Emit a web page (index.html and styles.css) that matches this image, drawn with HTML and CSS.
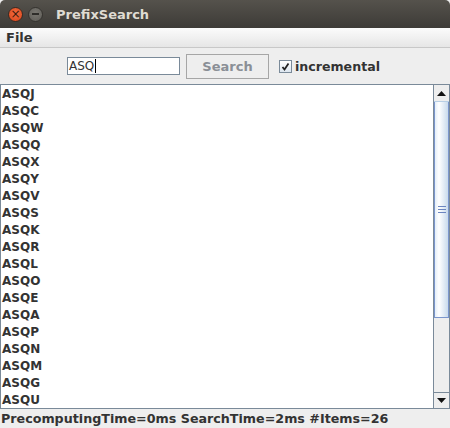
FILE: index.html
```html
<!DOCTYPE html>
<html>
<head>
<meta charset="utf-8">
<link rel="stylesheet" href="styles.css">
</head>
<body>
<div class="window">
  <div class="titlebar">
    <span class="btn close">×</span>
    <span class="btn min"><span class="dash"></span></span>
    <span class="title">PrefixSearch</span>
  </div>
  <div class="menubar"><span class="menu">File</span></div>
  <div class="toolbar">
    <div class="field">ASQ<span class="caret"></span></div>
    <div class="button">Search</div>
    <div class="check"><svg width="11" height="11" viewBox="0 0 11 11"><path d="M2.5 6 L4.5 8.5 L8.5 2.5" fill="none" stroke="#222" stroke-width="1.8"/></svg></div>
    <span class="label">incremental</span>
  </div>
  <div class="listwrap">
    <div class="list">
      <div class="item">ASQJ</div>
      <div class="item">ASQC</div>
      <div class="item">ASQW</div>
      <div class="item">ASQQ</div>
      <div class="item">ASQX</div>
      <div class="item">ASQY</div>
      <div class="item">ASQV</div>
      <div class="item">ASQS</div>
      <div class="item">ASQK</div>
      <div class="item">ASQR</div>
      <div class="item">ASQL</div>
      <div class="item">ASQO</div>
      <div class="item">ASQE</div>
      <div class="item">ASQA</div>
      <div class="item">ASQP</div>
      <div class="item">ASQN</div>
      <div class="item">ASQM</div>
      <div class="item">ASQG</div>
      <div class="item">ASQU</div>
    </div>
    <div class="scrollbar">
      <div class="arrow up"><svg width="9" height="5" viewBox="0 0 9 5"><path d="M0 5 L4.5 0 L9 5Z" fill="#111"/></svg></div>
      <div class="track">
        <div class="thumb"><div class="grip"><i></i><i></i><i></i></div></div>
      </div>
      <div class="arrow down"><svg width="9" height="5" viewBox="0 0 9 5"><path d="M0 0 L4.5 5 L9 0Z" fill="#111"/></svg></div>
    </div>
  </div>
  <div class="status">PrecomputingTime=0ms SearchTime=2ms #Items=26</div>
</div>
</body>
</html>
```
FILE: styles.css
```css
* { box-sizing: border-box; }
html, body { margin: 0; padding: 0; background: #eeeeee; }
body { width: 450px; height: 428px; overflow: hidden; font-family: "DejaVu Sans", sans-serif; }
.window { width: 450px; height: 428px; display: flex; flex-direction: column; background: #eeeeee; }
.titlebar {
  height: 28px; flex: none; display: flex; align-items: center;
  background: linear-gradient(#55524c, #3d3b37);
  border-radius: 5px 5px 0 0; padding-left: 8px;
}
.btn { width: 15px; height: 15px; border-radius: 50%; display: flex; align-items: center; justify-content: center; }
.close { background: radial-gradient(circle at 50% 40%, #f36c3f, #d9451b); color: #3a1a0c; font-size: 12px; line-height: 15px; border: 1px solid #3a2a22; }
.min { margin-left: 5px; background: radial-gradient(circle at 50% 40%, #7a7872, #5d5b56); border: 1px solid #35332f; }
.dash { width: 7px; height: 2px; background: #2e2d2a; }
.title { margin-left: 13px; color: #dfdbd2; font-weight: bold; font-size: 13px; }
.menubar {
  height: 20px; flex: none; background: linear-gradient(#fbfbfb, #e6e6e6);
  border-bottom: 1px solid #c8c8c8; display: flex; align-items: center; padding-left: 6px;
}
.menu { font-weight: bold; font-size: 13px; color: #333333; }
.toolbar { height: 36px; flex: none; display: flex; align-items: center; padding-left: 67px; }
.field {
  width: 113px; height: 18px; background: #fff; border: 1px solid #7a8a99;
  font-size: 12px; line-height: 16px; padding-left: 1px; color: #333; display: flex; align-items: center;
}
.caret { width: 1px; height: 14px; background: #000; margin-left: 1px; }
.button {
  margin-left: 6px; width: 83px; height: 25px; border: 1px solid #a6a6a6; background: #eeeeee;
  color: #8a8f96; font-weight: bold; font-size: 13px; display: flex; align-items: center; justify-content: center;
}
.check {
  margin-left: 10px; width: 13px; height: 13px; border: 1px solid #7a8a99;
  background: linear-gradient(#ffffff, #dde6ef); display: flex; align-items: center; justify-content: center;
}
.label { margin-left: 3px; font-weight: bold; font-size: 12.6px; color: #333333; }
.listwrap { flex: none; height: 325px; display: flex; border: 1px solid #7a8a99; border-right: 1px solid #7a8a99; background: #fff; }
.list { flex: 1; padding-top: 1px; padding-left: 1px; }
.item { height: 17px; line-height: 17px; font-weight: bold; font-size: 12px; color: #333333; }
.scrollbar { width: 16px; flex: none; display: flex; flex-direction: column; background: #eeeeee; border-left: 1px solid #7a8a99; }
.arrow { height: 17px; flex: none; display: flex; align-items: center; justify-content: center; background: #eeeeee; }
.up { border-bottom: 1px solid #b8cfe5; }
.down { border-top: 1px solid #7a8a99; height: 16px; }
.track { flex: 1; display: flex; flex-direction: column; }
.thumb {
  height: 216px; background: linear-gradient(90deg, #e4eef8, #ffffff 30%, #c8daec);
  border: 1px solid #7b96cc; border-top: none; display: flex; align-items: center; justify-content: center;
}
.grip { display: flex; flex-direction: column; gap: 2px; }
.grip i { display: block; width: 8px; height: 1px; background: #6b85c0; }
.status { height: 19px; flex: none; font-weight: bold; font-size: 12.7px; color: #333333; line-height: 19px; padding-left: 1px; }
```
